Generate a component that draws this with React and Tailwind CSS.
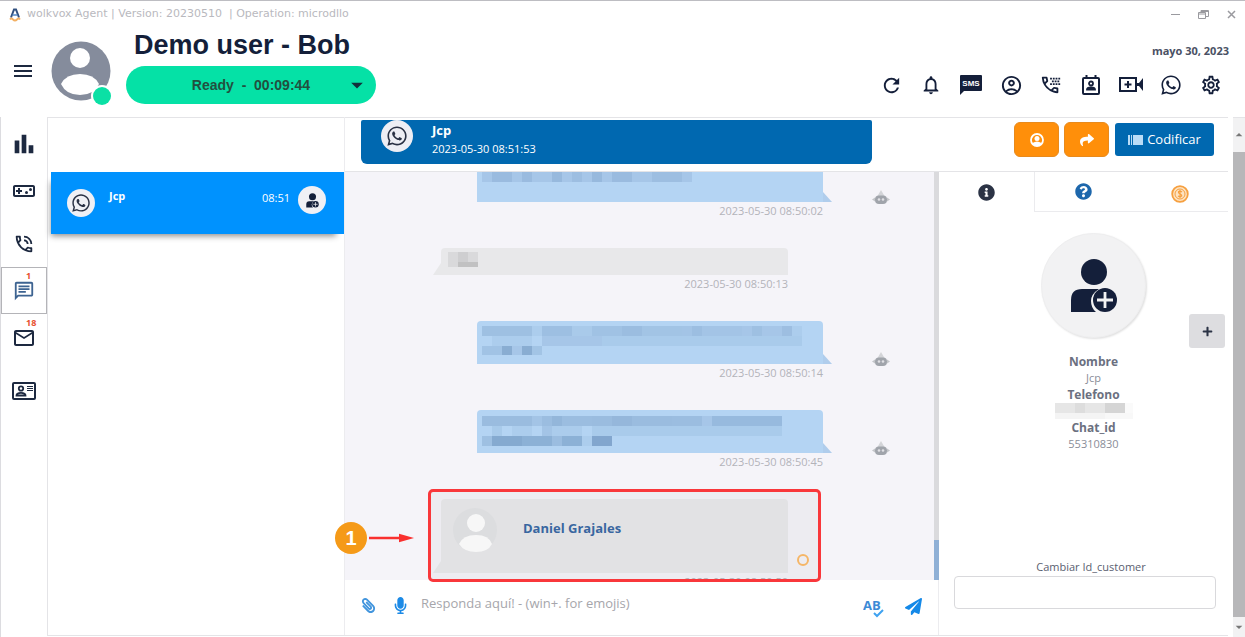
import {
  MdRefresh,
  MdNotificationsNone,
  MdOutlineAccountCircle,
  MdOutlineTty,
  MdOutlineSettings,
  MdOutlineVideogameAsset,
  MdOutlinePhoneInTalk,
  MdOutlineChat,
  MdMailOutline,
  MdMenu,
  MdArrowDropDown,
  MdArrowDropUp,
  MdBarChart,
} from "react-icons/md";
import {
  FaWhatsapp,
  FaShare,
  FaInfoCircle,
  FaQuestionCircle,
  FaPaperclip,
  FaMicrophone,
  FaPaperPlane,
  FaPlus,
} from "react-icons/fa";

function Logo() {
  return (
    <svg viewBox="0 0 12 14" className="h-[14px] w-3" aria-hidden="true">
      <path d="M2 9.500 5 1.500h2l3 8" fill="none" stroke="#31507f" strokeWidth="2" />
      <path d="M3.500 7h5" stroke="#4f86c6" strokeWidth="1.500" />
      <path d="M1 11.500q1.500-2 3 0 2 2 4 0 1.500-2 3 0" fill="none" stroke="#f3b063" strokeWidth="1.800" />
    </svg>
  );
}

function Avatar() {
  return (
    <svg viewBox="0 0 62 66" className="h-[66px] w-[62px]" aria-hidden="true">
      <circle cx="30" cy="30" r="29.500" fill="#858c9c" />
      <circle cx="29" cy="17" r="10" fill="#fff" />
      <path d="M10 43q5-10 19-10t19 10q-5 11-19 11t-19-11z" fill="#fff" />
      <circle cx="51" cy="55" r="11" fill="#fff" />
      <circle cx="51" cy="55" r="9" fill="#0be0a5" />
    </svg>
  );
}

function SmsIcon() {
  return (
    <svg viewBox="0 0 22 20" className="h-5 w-[22px]" aria-hidden="true">
      <path d="M1 0h20q1 0 1 1v14q0 1-1 1H4l-4 4V1q0-1 1-1z" fill="#141f3a" />
      <text x="11" y="11" textAnchor="middle" fontSize="8" fontWeight="700" fontFamily="Liberation Sans, sans-serif" fill="#fff">
        SMS
      </text>
    </svg>
  );
}

function ContactCalendarIcon() {
  return (
    <svg viewBox="0 0 20 20" className="size-5" fill="none" stroke="#141f3a" aria-hidden="true">
      <rect x="2" y="3" width="16" height="16" rx="1" strokeWidth="2" />
      <path d="M5.500 0v4M14.500 0v4" strokeWidth="2" />
      <circle cx="10" cy="8.500" r="2" strokeWidth="1.800" />
      <path d="M6 14.500q0-2 4-2t4 2z" strokeWidth="1.800" />
    </svg>
  );
}

function VideoAddIcon() {
  return (
    <svg viewBox="0 0 24 18" className="h-[18px] w-6" aria-hidden="true">
      <rect x="1" y="2" width="16" height="13" fill="none" stroke="#141f3a" strokeWidth="2" />
      <path d="M9 5v7M5.500 8.500h7" stroke="#141f3a" strokeWidth="2" />
      <path d="M17 7 20 7 24 2v13l-4-5h-3z" fill="#141f3a" />
    </svg>
  );
}

function ContactCardIcon() {
  return (
    <svg viewBox="0 0 24 18" className="h-[18px] w-6" fill="none" stroke="#1d2940" aria-hidden="true">
      <rect x="1" y="1" width="22" height="16" rx="1" strokeWidth="2" />
      <circle cx="9" cy="6.500" r="2.200" strokeWidth="1.800" />
      <path d="M4.500 13.500q0-2.700 4.500-2.700t4.500 2.700z" strokeWidth="1.800" />
      <path d="M15 4.500h6M15 6.500h6M15 8.500h6" strokeWidth="1" />
    </svg>
  );
}

function BotIcon() {
  return (
    <svg viewBox="0 0 18 18" className="mb-[14px] ml-[49px] size-[18px] shrink-0" aria-hidden="true">
      <path d="M9 2 5.500 8h7z" fill="#d3d4d8" />
      <path d="M0 11.500 3 9.500v4zM18 11.500l-3-2v4z" fill="#c3c5c9" />
      <rect x="3" y="7.500" width="12" height="8.500" rx="4" fill="#a0a4ab" />
      <circle cx="7" cy="11.500" r="1.300" fill="#dfe0e4" />
      <circle cx="11" cy="11.500" r="1.300" fill="#dfe0e4" />
    </svg>
  );
}

function SpellcheckIcon() {
  return (
    <svg viewBox="0 0 22 20" className="h-5 w-[22px]" aria-hidden="true">
      <text x="0" y="12" fontSize="13" fontWeight="700" fontFamily="Open Sans, sans-serif" fill="#3c8ad6">
        AB
      </text>
      <path d="m11 15 3 3 6-6" fill="none" stroke="#3fa2f0" strokeWidth="2" />
    </svg>
  );
}

function UserAdd({ className }) {
  return (
    <svg viewBox="0 0 48 54" className={className} aria-hidden="true">
      <circle cx="24" cy="13" r="13" fill="#141f3a" />
      <path d="M1 53V41Q1 30 12 30h17q-8 5-8 12 0 7 5 11z" fill="#141f3a" />
      <circle cx="35" cy="41" r="12" fill="#141f3a" />
      <path d="M35 33v16M27 41h16" stroke="#f2f2f3" strokeWidth="2.800" />
    </svg>
  );
}

function CoinIcon() {
  return (
    <svg viewBox="0 0 18 18" className="size-[18px]" fill="none" stroke="#f6a040" aria-hidden="true">
      <circle cx="9" cy="9" r="7.800" strokeWidth="1.800" fill="#fde3c2" />
      <circle cx="9" cy="9" r="5" strokeWidth="1" />
      <path d="M11 7q-2-1.500-3.300-.6Q6.800 8 9 9t1.600 2.200Q9.500 12.500 7 11M9 5v8" strokeWidth="1.200" />
    </svg>
  );
}

function Mosaic({ width, height, cells, fill }) {
  return (
    <svg
      width={width}
      height={height}
      viewBox={`0 0 ${width} ${height}`}
      shapeRendering="crispEdges"
      className="block shrink-0"
      aria-hidden="true"
    >
      {cells.map(([x, y, w, h, o], i) => (
        <rect key={i} x={x} y={y} width={w} height={h} fill={fill} fillOpacity={o} />
      ))}
    </svg>
  );
}

const mosaicTop = [
  [0, 0, 210, 10, 0.2], [10, 0, 20, 10, 0.2], [40, 0, 10, 10, 0.2], [70, 0, 10, 10, 0.25],
  [90, 0, 10, 10, 0.15], [110, 0, 10, 10, 0.25], [130, 0, 20, 10, 0.2], [170, 0, 30, 10, 0.15],
];
const mosaicTwo = [
  [0, 0, 50, 10, 0.3], [50, 0, 10, 10, 0.1], [60, 0, 30, 10, 0.32], [90, 0, 20, 10, 0.15],
  [110, 0, 30, 10, 0.28], [140, 0, 20, 10, 0.34], [160, 0, 40, 10, 0.25], [200, 0, 60, 10, 0.24],
  [210, 0, 10, 10, 0.12], [260, 0, 50, 10, 0.2], [270, 0, 10, 10, 0.12], [300, 0, 10, 10, 0.15], [310, 0, 10, 10, 0.1],
  [10, 10, 40, 10, 0.1], [60, 10, 60, 10, 0.2], [120, 10, 200, 10, 0.14],
  [0, 20, 20, 9, 0.26], [20, 20, 10, 9, 0.6], [30, 20, 10, 9, 0.2], [40, 20, 10, 9, 0.6], [50, 20, 10, 9, 0.25],
];
const mosaicThree = [
  [0, 0, 50, 10, 0.36], [50, 0, 10, 10, 0.24], [60, 0, 50, 10, 0.34], [70, 0, 10, 10, 0.15],
  [110, 0, 80, 10, 0.36], [130, 0, 20, 10, 0.1], [190, 0, 30, 10, 0.35], [220, 0, 10, 10, 0.2],
  [230, 0, 60, 10, 0.4], [290, 0, 10, 10, 0.4],
  [10, 10, 10, 10, 0.16], [30, 10, 20, 10, 0.1], [60, 10, 10, 10, 0.24], [70, 10, 30, 10, 0.12], [110, 10, 190, 10, 0.14],
  [0, 20, 10, 10, 0.3], [10, 20, 30, 10, 0.65], [40, 20, 30, 10, 0.55], [70, 20, 10, 10, 0.35],
  [80, 20, 20, 10, 0.55], [100, 20, 10, 10, 0.1], [110, 20, 20, 10, 0.7],
];
const mosaicReply = [
  [0, 0, 30, 10, 0.12], [10, 0, 10, 10, 0.1], [0, 10, 10, 5, 0.12], [10, 10, 20, 5, 0.35],
];
const mosaicPhone = [
  [0, 0, 70, 10, 0.18], [20, 0, 10, 10, 0.08], [50, 0, 20, 10, 0.15], [70, 0, 8, 10, 0.04], [0, 10, 50, 6, 0.08], [50, 10, 28, 6, 0.05],
];

function Stamp({ children }) {
  return <time className="block text-right text-[11px] leading-[18px] text-[#b3b3b9]">{children}</time>;
}

function Outgoing({ time, className, children }) {
  return (
    <div className="ml-9 flex items-end">
      <div className="w-full max-w-[346px]">
        <div className={"relative rounded-t bg-[#b4d4f3] px-[5px] " + className}>
          {children}
          <svg viewBox="0 0 9 10" className="absolute bottom-0 left-full h-[10px] w-[9px]" aria-hidden="true">
            <path d="M0 0v10h9z" fill="#b0cdec" />
          </svg>
        </div>
        <Stamp>{time}</Stamp>
      </div>
      <BotIcon />
    </div>
  );
}

function Incoming({ time, className, tail, children }) {
  return (
    <div className="w-full max-w-[347px]">
      <div className={"relative rounded-t " + className}>
        {children}
        <svg viewBox="0 0 8 12" className="absolute right-full bottom-0 h-3 w-2" aria-hidden="true">
          <path d="M8 0v12H0z" fill={tail} />
        </svg>
      </div>
      <Stamp>{time}</Stamp>
    </div>
  );
}

function SideButton({ label, active, badge, children }) {
  return (
    <button
      aria-label={label}
      className={
        "relative flex h-[47px] w-full items-center justify-center border " +
        (active ? "border-[#b4b4b8] text-[#3d6391]" : "border-transparent text-[#1d2940]")
      }
    >
      {children}
      {badge && (
        <span className="absolute top-[3px] left-6 text-[9px] leading-[10px] font-bold text-[#e8502e]">{badge}</span>
      )}
    </button>
  );
}

const tools = [
  ["Actualizar", <MdRefresh className="size-[23px]" />],
  ["Notificaciones", <MdNotificationsNone className="size-[22px]" />],
  ["SMS", <SmsIcon />],
  ["Cuenta", <MdOutlineAccountCircle className="size-[23px]" />],
  ["Marcador", <MdOutlineTty className="size-[22px]" />],
  ["Agenda", <ContactCalendarIcon />],
  ["Videollamada", <VideoAddIcon />],
  ["WhatsApp", <FaWhatsapp className="size-[22px]" />],
  ["Ajustes", <MdOutlineSettings className="size-[22px]" />],
];

function Header() {
  return (
    <header className="shrink-0 border-t border-[#bdbdc2]">
      <div className="flex h-[27px] items-center justify-between pr-2 pl-[9px]">
        <div className="flex items-center gap-[6px]">
          <Logo />
          <span className="font-['DejaVu_Sans',sans-serif] text-[11px] whitespace-pre text-[#b9b9be]">
            {"wolkvox Agent | Version: 20230510  | Operation: microdllo"}
          </span>
        </div>
        <div className="flex items-center gap-[17px] text-[#9a9a9f]">
          <button aria-label="Minimizar" className="flex size-[11px] items-center">
            <svg viewBox="0 0 11 11" className="size-[11px]"><path d="M1 5.500h9" stroke="currentColor" /></svg>
          </button>
          <button aria-label="Restaurar">
            <svg viewBox="0 0 11 11" className="size-[11px]" fill="none" stroke="currentColor">
              <path d="M.5 3.500h7v6h-7zM.5 5h7M3 3.500v-2h7.500v6H8M3 2.500h7" />
            </svg>
          </button>
          <button aria-label="Cerrar">
            <svg viewBox="0 0 11 11" className="size-[11px]" fill="none" stroke="currentColor" strokeWidth="1.500">
              <path d="m2 2 7 7M9 2 2 9" />
            </svg>
          </button>
        </div>
      </div>
      <div className="flex h-[89px] justify-between pr-4">
        <div className="flex">
          <button aria-label="Menú" className="flex h-[86px] w-[45px] items-center justify-center text-[#1d2940]">
            <MdMenu className="size-6" />
          </button>
          <div className="pt-[13px] pl-[6px]">
            <Avatar />
          </div>
          <div className="pl-[13px]">
            <h1 className="pl-2 font-['Liberation_Sans',Arial,sans-serif] text-[27px] leading-[34px] font-bold text-[#141f3a]">
              Demo user - Bob
            </h1>
            <button className="mt-1 grid h-[38px] w-[250px] grid-cols-[1fr_auto_1fr] items-center rounded-full bg-[#05e1a6] font-['Liberation_Sans',Arial,sans-serif] text-sm font-bold text-[#22503f]">
              <span />
              <span className="whitespace-pre">{"Ready  -  00:09:44"}</span>
              <MdArrowDropDown className="mr-[5px] size-7 justify-self-end text-[#12303a]" />
            </button>
          </div>
        </div>
        <div className="flex flex-col items-end">
          <time className="pt-[14px] text-[11px] leading-[18px] font-bold text-[#4a5164]">mayo 30, 2023</time>
          <nav className="mt-[9px] -mr-[2px] flex text-[#141f3a]">
            {tools.map(([label, icon]) => (
              <button key={label} aria-label={label} className="flex h-8 w-10 items-center justify-center">
                {icon}
              </button>
            ))}
          </nav>
        </div>
      </div>
    </header>
  );
}

function ChatList() {
  return (
    <section className="w-[297px] shrink-0 border-t border-l border-[#e4e4e7] pt-[54px] pl-[3px]">
      <button className="flex h-[62px] w-full items-start bg-[#0092fe] pr-[18px] pl-4 text-left text-white shadow-[-4px_6px_6px_-4px_rgba(0,0,0,0.45)]">
        <span className="mt-[17px] flex size-7 items-center justify-center rounded-full bg-[#f0f0f5] text-[#2a3144]">
          <FaWhatsapp className="size-5" />
        </span>
        <span className="mt-[15px] ml-[14px] flex-1 text-[11px] leading-[18px] font-bold">Jcp</span>
        <time className="mt-[17px] mr-2 text-[11px] leading-[18px]">08:51</time>
        <span className="mt-[14px] flex size-7 items-center justify-center rounded-full bg-[#f0f0f5]">
          <UserAdd className="h-[15px] w-[13px]" />
        </span>
      </button>
    </section>
  );
}

function ConversationHeader() {
  return (
    <div className="flex h-[55px] shrink-0 items-start justify-between border-t border-b border-[#e4e4e7] pt-[2px] pr-[14px] pl-4">
      <div className="flex h-[44px] w-full max-w-[511px] overflow-hidden rounded-b-md rounded-t-xs bg-[#0068b0] pl-5 text-white">
        <span className="flex size-8 shrink-0 items-center justify-center rounded-full bg-[#eeeef4] text-[#2a3144]">
          <FaWhatsapp className="size-[22px]" />
        </span>
        <div className="pl-[19px]">
          <div className="text-[13px] leading-5 font-bold">Jcp</div>
          <time className="block text-[11px] leading-[18px]">2023-05-30 08:51:53</time>
        </div>
      </div>
      <div className="flex items-center gap-[5px] pt-[2px]">
        <button aria-label="Asignar" className="flex h-[35px] w-[45px] items-center justify-center rounded-md border border-[#e88a1c] bg-[#ff8f0a]">
          <svg viewBox="0 0 14 14" className="size-[14px]" aria-hidden="true">
            <circle cx="7" cy="7" r="6" fill="none" stroke="#fff" strokeWidth="1.800" />
            <circle cx="7" cy="5.500" r="2.500" fill="#fff" />
            <path d="M2.500 10q4.500-3 9 0-1.500 3-4.500 3t-4.500-3z" fill="#fff" />
          </svg>
        </button>
        <button aria-label="Transferir" className="flex h-[35px] w-[45px] items-center justify-center rounded-md border border-[#e88a1c] bg-[#ff8f0a] text-white">
          <FaShare className="size-[14px]" />
        </button>
        <button className="ml-px flex h-[33px] w-[99px] items-center justify-center gap-1 rounded-[3px] bg-[#0068b0] text-[13px] text-white">
          <svg viewBox="0 0 15 12" className="h-3 w-[15px]" aria-hidden="true">
            <path d="M0 1h2v10H0zM3 1h1v10H3zM5 1h10v10H5z" fill="#b9dcf7" />
          </svg>
          Codificar
        </button>
      </div>
    </div>
  );
}

function Messages() {
  return (
    <div className="relative flex min-h-0 flex-1">
      <div className="flex min-w-0 flex-1 flex-col gap-7 overflow-hidden bg-[#f5f4f9] pl-24">
        <Outgoing time="2023-05-30 08:50:02" className="h-[30px] rounded-t-none">
          <Mosaic width={210} height={10} cells={mosaicTop} fill="#6c93bd" />
        </Outgoing>
        <Incoming time="2023-05-30 08:50:13" className="h-[27px] bg-[#e8e8ea] pt-1 pl-[7px]" tail="#e8e8ea">
          <Mosaic width={30} height={15} cells={mosaicReply} fill="#777777" />
        </Incoming>
        <Outgoing time="2023-05-30 08:50:14" className="h-[43px] pt-[5px]">
          <Mosaic width={320} height={30} cells={mosaicTwo} fill="#6c93bd" />
        </Outgoing>
        <Outgoing time="2023-05-30 08:50:45" className="h-[43px] pt-[6px]">
          <Mosaic width={300} height={30} cells={mosaicThree} fill="#6c93bd" />
        </Outgoing>
        <Incoming time="2023-05-30 08:50:50" className="flex h-[74px] items-start bg-[#eaeaec] pt-[9px] pl-3" tail="#eaeaec">
          <svg viewBox="0 0 44 44" className="size-11" aria-hidden="true">
            <circle cx="22" cy="22" r="22" fill="#e4e5e7" />
            <circle cx="23" cy="15" r="9" fill="#fff" />
            <path d="M6 36q4-9 17-9t16 9q-4 8-16 8T6 36z" fill="#fff" />
          </svg>
          <span className="pt-2 pl-[26px] text-[13px] leading-6 font-bold text-[#3b6aa6]">Daniel Grajales</span>
        </Incoming>
      </div>
      <div className="flex w-[5px] shrink-0 flex-col justify-end bg-[#dadadd]">
        <div className="h-10 bg-[#8fb0d6]" />
      </div>
      <div className="absolute top-[317px] left-[83px] z-10 h-[93px] w-[393px] rounded-[5px] border-3 border-[#f9373b] bg-black/3">
        <span className="absolute right-[9px] bottom-[13px] size-3 rounded-full border-2 border-[#f5b668]" />
      </div>
      <div className="absolute top-[350px] -left-[10px] z-10 flex items-center gap-[2px]">
        <span className="flex size-8 items-center justify-center rounded-full bg-[#f59a18] font-['Liberation_Sans',Arial,sans-serif] text-xl font-bold text-white">
          1
        </span>
        <svg viewBox="0 0 45 10" className="h-[10px] w-[45px]" aria-hidden="true">
          <path d="M0 5h32" stroke="#f9302f" strokeWidth="2.500" />
          <path d="M30 .8 45 5 30 9.200z" fill="#f9302f" />
        </svg>
      </div>
    </div>
  );
}

function Composer() {
  return (
    <form className="flex h-[55px] shrink-0 items-start border-r border-[#ececef] px-4">
      <button type="button" aria-label="Adjuntar" className="mt-[18px] text-[#4295dd]">
        <FaPaperclip className="size-[15px] -scale-x-100" />
      </button>
      <button type="button" aria-label="Grabar audio" className="mt-[17px] ml-4 text-[#1c8ae6]">
        <FaMicrophone className="size-[17px]" />
      </button>
      <input
        aria-label="Mensaje"
        placeholder="Responda aquí! - (win+. for emojis)"
        className="mt-[11px] ml-3 min-w-0 flex-1 text-[13px] leading-6 outline-none placeholder:text-[#a6a6ab]"
      />
      <button type="button" aria-label="Ortografía" className="mt-[18px]">
        <SpellcheckIcon />
      </button>
      <button type="button" aria-label="Enviar" className="mt-[18px] ml-5 text-[#1489e8]">
        <FaPaperPlane className="size-[17px]" />
      </button>
    </form>
  );
}

function CustomerPanel() {
  return (
    <aside className="flex w-[289px] shrink-0 flex-col">
      <div role="tablist" className="grid h-[40px] shrink-0 grid-cols-3">
        <button role="tab" aria-selected="true" aria-label="Información" className="flex items-center justify-center border-r border-[#ebebee] text-[#2b3345]">
          <FaInfoCircle className="size-[17px]" />
        </button>
        <button role="tab" aria-selected="false" aria-label="Ayuda" className="flex items-center justify-center border-b border-[#ebebee] text-[#1d67ac]">
          <FaQuestionCircle className="size-[17px]" />
        </button>
        <button role="tab" aria-selected="false" aria-label="Pagos" className="flex items-center justify-center border-b border-[#ebebee] pt-1">
          <CoinIcon />
        </button>
      </div>
      <div className="relative flex flex-col items-center pt-[21px] pl-[20px] text-center text-[#6b7080]">
        <div className="flex size-[105px] items-center justify-center rounded-full border border-[#eeeeef] bg-[#f2f2f3] shadow-[1px_1px_2px_rgba(0,0,0,0.12)]">
          <UserAdd className="h-[54px] w-12" />
        </div>
        <button aria-label="Agregar" className="absolute top-[102px] right-[3px] flex h-[34px] w-9 items-center justify-center rounded-[3px] bg-[#dddde0] text-[#2b3345]">
          <FaPlus className="size-[11px]" />
        </button>
        <dl className="mt-[15px] text-[11px] leading-4">
          <dt className="text-[12px] leading-[17px] font-bold">Nombre</dt>
          <dd className="text-[#8a8d98]">Jcp</dd>
          <dt className="text-[12px] leading-[17px] font-bold">Telefono</dt>
          <dd className="flex h-4 justify-center">
            <Mosaic width={78} height={16} cells={mosaicPhone} fill="#777777" />
          </dd>
          <dt className="text-[12px] leading-[17px] font-bold">Chat_id</dt>
          <dd className="text-[#8a8d98]">55310830</dd>
        </dl>
      </div>
      <div className="mt-auto mb-[26px] flex flex-col pr-3 pl-[15px]">
        <label htmlFor="customer" className="pl-3 text-center text-[11px] leading-[18px] text-[#5a6070]">
          Cambiar Id_customer
        </label>
        <input id="customer" className="h-[33px] rounded border border-[#d9d9dc] px-2 text-xs" />
      </div>
    </aside>
  );
}

export default function App() {
  return (
    <div className="flex h-screen flex-col overflow-hidden bg-white font-['Open_Sans','Noto_Sans',sans-serif]">
      <Header />
      <div className="flex min-h-0 flex-1">
        <nav className="flex w-[47px] shrink-0 flex-col gap-[6px] border-l border-[#dcdce0] pt-[3px]">
          <div>
            <SideButton label="Estadísticas">
              <MdBarChart className="size-7" />
            </SideButton>
            <SideButton label="Panel">
              <MdOutlineVideogameAsset className="size-6" />
            </SideButton>
          </div>
          <div>
            <SideButton label="Llamadas">
              <MdOutlinePhoneInTalk className="size-[22px]" />
            </SideButton>
            <SideButton label="Chats" active badge="1">
              <MdOutlineChat className="size-[22px]" />
            </SideButton>
            <SideButton label="Correos" badge="18">
              <MdMailOutline className="size-6" />
            </SideButton>
          </div>
          <div>
            <SideButton label="Contactos">
              <ContactCardIcon />
            </SideButton>
          </div>
        </nav>
        <div className="mb-px flex min-w-0 flex-1 border-b border-[#e4e4e7]">
          <ChatList />
          <main className="flex min-w-0 flex-1 flex-col border-l border-[#ececef]">
            <ConversationHeader />
            <div className="flex min-h-0 flex-1">
              <div className="flex min-w-0 flex-1 flex-col">
                <Messages />
                <Composer />
              </div>
              <CustomerPanel />
            </div>
          </main>
        </div>
        <div className="ml-[5px] flex w-3 shrink-0 flex-col items-center border-t border-[#e4e4e7] bg-[#f2f2f3] text-[#777]">
          <MdArrowDropUp className="my-[9px] size-4" />
          <div className="w-full flex-1 bg-[#b7b7b9]" />
          <MdArrowDropDown className="my-[2px] size-4" />
        </div>
      </div>
    </div>
  );
}
